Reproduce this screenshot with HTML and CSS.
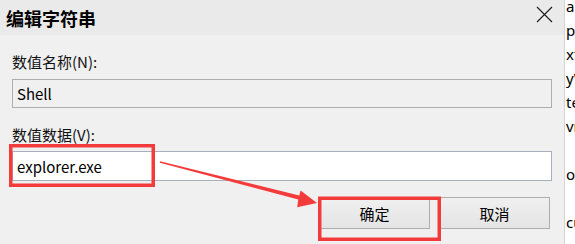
FILE: index.html
```html
<!DOCTYPE html>
<html lang="zh-CN">
<head>
    <meta charset="UTF-8">
    <title>编辑字符串</title>
    <link rel="stylesheet" href="styles.css">
</head>
<body>
<div class="screen">
    <div class="dialog">
        <div class="title-bar">
            <span class="title">编辑字符串</span>
            <svg class="close" width="17" height="17" viewBox="0 0 17 17">
                <path d="M1 1 L16 16 M16 1 L1 16" stroke="#1a1a1a" stroke-width="1.1" fill="none"/>
            </svg>
        </div>
        <div class="dialog-body">
            <label class="field-label">数值名称(N):</label>
            <div class="text-box readonly">Shell</div>
            <label class="field-label second">数值数据(V):</label>
            <div class="text-box edit">explorer.exe</div>
            <div class="button-row">
                <button class="btn">确定</button>
                <button class="btn">取消</button>
            </div>
        </div>
    </div>
    <!-- ventana de fondo, solo se ve un borde -->
    <div class="behind">
        <div>a</div>
        <div>p</div>
        <div>xt</div>
        <div>yW</div>
        <div>te</div>
        <div>vn</div>
        <div>&nbsp;</div>
        <div>or</div>
        <div>&nbsp;</div>
        <div>cu</div>
        <div>-</div>
    </div>

    <svg class="marks" width="575" height="244" viewBox="0 0 575 244">
        <rect x="10.75" y="145.75" width="142.5" height="39.5" fill="none" stroke="#f43b3b" stroke-width="3.5"/>
        <rect x="319.75" y="198.25" width="119.5" height="41" fill="none" stroke="#f43b3b" stroke-width="3.5"/>
        <polygon points="160,161.3 299.3,195.4 300.6,190.5 317,203 297.2,207.2 298.3,199.4 159.8,162.7" fill="#f43b3b"/>
    </svg>
</div>
</body>
</html>
```

FILE: styles.css
```css
body {
    margin: 0;
    padding: 0;
    font-family: "Noto Sans CJK SC", "Noto Sans", sans-serif;
    color: #000;
    background-color: #ffffff;
}

.screen {
    position: relative;
    display: flex;
    width: 575px;
    height: 244px;
    overflow: hidden;
}

.dialog {
    width: 564px;
    height: 244px;
    background-color: #f0f0f0;
    border-right: 1px solid #d4d4d4;
    flex-shrink: 0;
}

.title-bar {
    height: 35px;
    background-color: #eaeaea;
    display: flex;
    align-items: center;
    justify-content: space-between;
    padding: 0 11px 0 6px;
}

.title {
    font-size: 18px;
    font-weight: bold;
    letter-spacing: 0px;
    margin-top: 1px;
}

.close {
    margin-top: -6px;
}

.dialog-body {
    padding: 17px 12px 0 12px;
    display: flex;
    flex-direction: column;
}

.field-label {
    font-size: 15px;
    line-height: 20px;
    height: 20px;
    color: #111;
}

.field-label.second {
    margin-top: 17px;
}

.text-box {
    margin-top: 7px;
    font-size: 15px;
    box-sizing: border-box;
    display: flex;
    align-items: center;
    padding-left: 4px;
}

.text-box.readonly {
    height: 29px;
    border: 1px solid #adadad;
    background-color: #f0f0f0;
}

.text-box.edit {
    margin-top: 6px;
    height: 30px;
    border: 1px solid #a7b0ba;
    background-color: #ffffff;
}

.button-row {
    display: flex;
    justify-content: flex-end;
    gap: 9px;
    margin-top: 16px;
    padding-right: 2px;
}

.btn {
    font-family: "Noto Sans CJK SC", sans-serif;
    font-size: 15px;
    width: 111px;
    height: 32px;
    padding: 0;
    border: 1px solid #adadad;
    background: linear-gradient(#f0f0f0, #e4e4e4);
    color: #000;
}

.behind {
    flex: 1;
    background-color: #ffffff;
    overflow: hidden;
    font-family: "Noto Sans", sans-serif;
    font-size: 15px;
    line-height: 24px;
    padding-left: 1px;
    margin-top: -6px;
    white-space: nowrap;
}

.marks {
    position: absolute;
    left: 0;
    top: 0;
    pointer-events: none;
}
```
